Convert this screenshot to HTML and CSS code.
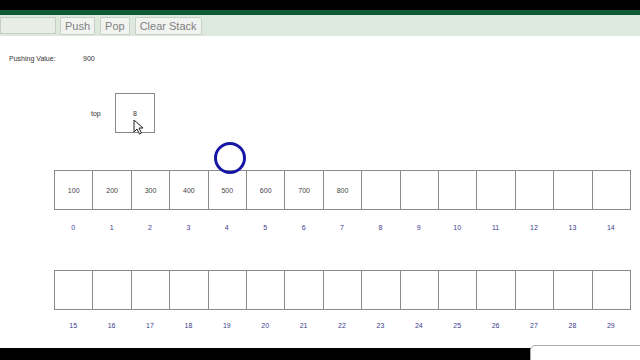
FILE: index.html
```html
<!DOCTYPE html>
<html>
<head>
<meta charset="utf-8">
<link rel="stylesheet" href="styles.css">
</head>
<body>
<div class="frame">
  <div class="topbar"></div>
  <div class="toolbar">
    <input class="field" type="text">
    <button class="btn">Push</button>
    <button class="btn">Pop</button>
    <button class="btn">Clear Stack</button>
  </div>
  <div class="main">
    <div class="pushing"><span class="plabel">Pushing Value:</span><span class="pvalue">900</span></div>
    <div class="toprow">
      <span class="toplabel">top</span>
      <div class="topbox">8</div>
    </div>
    <div class="cells">
      <div class="cell">100</div><div class="cell">200</div><div class="cell">300</div><div class="cell">400</div><div class="cell">500</div><div class="cell">600</div><div class="cell">700</div><div class="cell">800</div><div class="cell"></div><div class="cell"></div><div class="cell"></div><div class="cell"></div><div class="cell"></div><div class="cell"></div><div class="cell"></div>
    </div>
    <div class="idx">
      <span>0</span><span>1</span><span>2</span><span>3</span><span>4</span><span>5</span><span>6</span><span>7</span><span>8</span><span>9</span><span>10</span><span>11</span><span>12</span><span>13</span><span>14</span>
    </div>
    <div class="cells second">
      <div class="cell"></div><div class="cell"></div><div class="cell"></div><div class="cell"></div><div class="cell"></div><div class="cell"></div><div class="cell"></div><div class="cell"></div><div class="cell"></div><div class="cell"></div><div class="cell"></div><div class="cell"></div><div class="cell"></div><div class="cell"></div><div class="cell"></div>
    </div>
    <div class="idx idx2">
      <span>15</span><span>16</span><span>17</span><span>18</span><span>19</span><span>20</span><span>21</span><span>22</span><span>23</span><span>24</span><span>25</span><span>26</span><span>27</span><span>28</span><span>29</span>
    </div>
  </div>
  <div class="bottombar"><div class="tab"></div></div>
  <div class="circle"></div>
  <svg class="cursor" width="11" height="16" viewBox="0 0 11 16"><path d="M1 1 L1 13 L4 10 L6.5 15 L8.5 14 L6 9 L10 9 Z" fill="#fff" stroke="#222" stroke-width="1" stroke-linejoin="round"/></svg>
</div>
</body>
</html>
```
FILE: styles.css
```css
html, body { margin: 0; padding: 0; background: #000; }
.frame { position: relative; width: 640px; height: 360px; overflow: hidden; background: #fff; display: flex; flex-direction: column; font-family: "Liberation Sans", Arial, sans-serif; }
.topbar { height: 10px; background: #000; flex: none; }
.toolbar { flex: none; height: 21px; border-top: 5px solid #0d5a36; background: #dde9dc; display: flex; align-items: center; box-sizing: content-box; }
.field { width: 56px; height: 17px; box-sizing: border-box; margin: 0; padding: 0; border: 1px solid #c4cfc3; background: #e8eee6; }
.btn { height: 18px; box-sizing: border-box; margin: 0 0 0 4px; padding: 0 4px; border: 1px solid #c8cfc7; background: #f1f3f0; color: #808080; font-family: "Liberation Sans", Arial, sans-serif; font-size: 11px; line-height: 16px; border-radius: 1px; }
.btn + .btn { margin-left: 5px; }
.main { flex: 1; display: flex; flex-direction: column; }
.pushing { margin-top: 18px; height: 10px; font-size: 7px; line-height: 10px; color: #333; display: flex; padding-left: 9px; }
.plabel { width: 74px; }
.toprow { margin-top: 29px; display: flex; align-items: center; padding-left: 91px; height: 40px; }
.toplabel { font-size: 7px; color: #333; width: 24px; }
.topbox { width: 40px; height: 40px; box-sizing: border-box; border: 1px solid #888; display: flex; align-items: center; justify-content: center; font-size: 7px; color: #333; }
.cells { margin-top: 37px; margin-left: 54px; width: 577px; height: 40px; box-sizing: border-box; display: grid; grid-template-columns: repeat(15, 1fr); border: 1px solid #8a8a8a; border-right: none; }
.cell { border-right: 1px solid #8a8a8a; display: flex; align-items: center; justify-content: center; font-size: 7px; color: #444; }
.second { margin-top: 37px; }
.idx { margin-top: 13px; margin-left: 54px; width: 576px; height: 10px; display: grid; grid-template-columns: repeat(15, 1fr); font-size: 7px; line-height: 10px; color: #3c3c8c; }
.idx2 { margin-top: 11px; }
.idx span { text-align: center; }
.bottombar { flex: none; height: 12px; background: #000; position: relative; margin-top: auto; }
.tab { position: absolute; left: 530px; top: -3px; width: 120px; height: 14px; background: #fff; border: 1px solid #aaa; border-radius: 5px 0 0 0; }
.circle { position: absolute; left: 214px; top: 142px; width: 32px; height: 32px; box-sizing: border-box; border: 3px solid #1717a6; border-radius: 50%; }
.cursor { position: absolute; left: 133px; top: 119px; }
```
